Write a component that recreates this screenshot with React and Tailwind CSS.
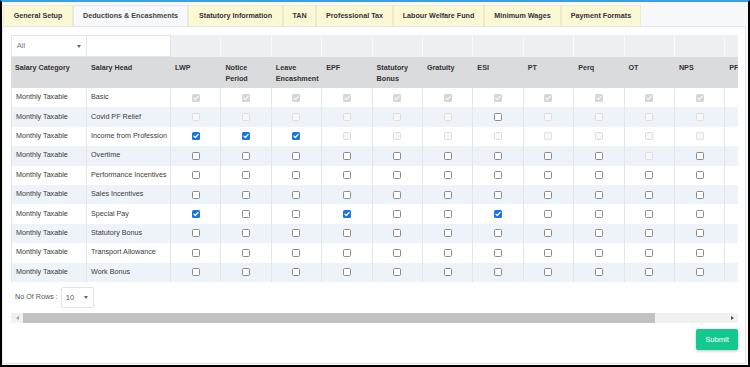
import React from 'react';

const tabs = [
  { label: 'General Setup', w: 'w-[70px]' },
  { label: 'Deductions & Encashments', w: 'w-[115px]', active: true },
  { label: 'Statutory Information', w: 'w-[95px]' },
  { label: 'TAN', w: 'w-[33px]' },
  { label: 'Professional Tax', w: 'w-[77px]' },
  { label: 'Labour Welfare Fund', w: 'w-[91px]' },
  { label: 'Minimum Wages', w: 'w-[77px]' },
  { label: 'Payment Formats', w: 'w-[80px]' },
];

const cols = ['LWP', 'Notice Period', 'Leave Encashment', 'EPF', 'Statutory Bonus', 'Gratuity', 'ESI', 'PT', 'Perq', 'OT', 'NPS', 'PF'];

const all = (s) => Array(11).fill(s);

const rows = [
  { head: 'Basic', boxes: all('dc') },
  { head: 'Covid PF Relief', boxes: ['d', 'd', 'd', 'd', 'd', 'd', 'u', 'd', 'd', 'd', 'd'] },
  { head: 'Income from Profession', boxes: ['c', 'c', 'c', 'd', 'd', 'd', 'd', 'd', 'd', 'd', 'd'] },
  { head: 'Overtime', boxes: ['u', 'u', 'u', 'u', 'u', 'u', 'u', 'u', 'u', 'd', 'u'] },
  { head: 'Performance Incentives', boxes: all('u') },
  { head: 'Sales Incentives', boxes: all('u') },
  { head: 'Special Pay', boxes: ['c', 'u', 'u', 'c', 'u', 'u', 'c', 'u', 'u', 'u', 'u'] },
  { head: 'Statutory Bonus', boxes: all('u') },
  { head: 'Transport Allowance', boxes: all('u') },
  { head: 'Work Bonus', boxes: all('u') },
];

function Tick({ color }) {
  return (
    <svg width="8" height="8" viewBox="0 0 8 8" className="absolute inset-0">
      <path d="M1.9 4.1 L3.3 5.5 L6.1 2.5" fill="none" stroke={color} strokeWidth="1.2" strokeLinecap="round" strokeLinejoin="round" />
    </svg>
  );
}

function Box({ s }) {
  if (s === 'c') {
    return (
      <span className="relative block w-[8px] h-[8px] rounded-[1.5px] bg-[#1a73e8]">
        <Tick color="#ffffff" />
      </span>
    );
  }
  if (s === 'dc') {
    return (
      <span className="relative block w-[8px] h-[8px] rounded-[1.5px] bg-[#d6d6d6]">
        <Tick color="#f4f4f4" />
      </span>
    );
  }
  if (s === 'd') {
    return <span className="block w-[8px] h-[8px] rounded-[1.5px] border border-[#dedede] bg-[#f7f7f7]" />;
  }
  return <span className="block w-[8px] h-[8px] rounded-[1.5px] border border-[#8a8a8a] bg-white" />;
}

export default function App() {
  return (
    <div
      className="w-[750px] h-[367px] flex flex-col bg-[#f7f8fa] border-x-2 border-b-2 border-black border-t-2 border-t-[#3d9fe2] overflow-hidden text-[#333]"
      style={{ fontFamily: '"Liberation Sans", Arial, sans-serif' }}
    >
      {/* tabs */}
      <div className="flex pl-[1px] pt-[3px]">
        {tabs.map((t) => (
          <div
            key={t.label}
            className={
              'h-[21px] flex items-center justify-center text-[7.2px] font-bold border-x border-t ' +
              t.w +
              (t.active
                ? ' bg-[#f6f8fa] border-[#e4e6e9] text-[#444]'
                : ' bg-[#fbf8d6] border-[#efebc8] text-[#333]')
            }
          >
            {t.label}
          </div>
        ))}
      </div>

      {/* panel */}
      <div className="flex-1 mr-[2px] mb-[1px] bg-white border border-[#e6e7ea] pl-[8px] pr-[7px] pt-[8px] flex flex-col">
        <div className="w-[727px] overflow-hidden">
          <div className="w-[800px]">
            {/* filter row */}
            <div className="flex h-[22px] text-[7.2px]">
              <div className="w-[76px] shrink-0 border border-[#e3e5e8] bg-white flex items-center justify-between pl-[5px] pr-[5px]">
                <span className="text-[#777]">All</span>
                <span className="block w-0 h-0 border-x-[2.5px] border-x-transparent border-t-[3px] border-t-[#666]" />
              </div>
              <div className="w-[84px] shrink-0 border-y border-r border-[#e3e5e8] bg-white" />
              {cols.map((c) => (
                <div key={c} className="w-[50.4px] shrink-0 bg-[#eef0f3] border-r border-[#f9fafb]" />
              ))}
            </div>

            {/* header row */}
            <div className="flex h-[31px] bg-[#dadbdc] text-[7.2px] font-bold leading-[11px] text-[#333]">
              <div className="w-[76px] shrink-0 pl-[4px] pt-[5px]">Salary Category</div>
              <div className="w-[84px] shrink-0 pl-[4px] pt-[5px]">Salary Head</div>
              {cols.map((c) => (
                <div key={c} className="w-[50.4px] shrink-0 pl-[4px] pr-[3px] pt-[5px]">
                  {c}
                </div>
              ))}
            </div>

            {/* body */}
            {rows.map((r, i) => (
              <div
                key={r.head}
                className={'flex h-[19.4px] text-[7.2px] text-[#3a3a3a] ' + (i % 2 ? 'bg-[#eef2f9]' : 'bg-white')}
              >
                <div className="w-[76px] shrink-0 pl-[4px] flex items-center border-l border-r border-[#e3e6ea]">
                  Monthly Taxable
                </div>
                <div className="w-[84px] shrink-0 pl-[4px] flex items-center border-r border-[#e3e6ea]">{r.head}</div>
                {cols.map((c, j) => (
                  <div key={c} className="w-[50.4px] shrink-0 flex items-center justify-center border-r border-[#e3e6ea]">
                    {j < 11 && <Box s={r.boxes[j]} />}
                  </div>
                ))}
              </div>
            ))}
          </div>
        </div>

        {/* rows per page */}
        <div className="flex items-center mt-[5px] h-[21px] text-[7.2px] text-[#555]">
          <span className="pl-[4px]">No Of Rows :</span>
          <div className="ml-[3px] w-[33px] h-[21px] border border-[#e1e3e6] rounded-[2px] flex items-center justify-between pl-[4px] pr-[5px] text-[#555]">
            <span className="text-[7.6px]">10</span>
            <span className="block w-0 h-0 border-x-[2.5px] border-x-transparent border-t-[3px] border-t-[#666]" />
          </div>
        </div>

        {/* horizontal scrollbar */}
        <div className="mt-[5px] w-[727px] h-[10px] bg-[#f1f1f1] flex items-center">
          <div className="w-[12px] flex items-center justify-center">
            <span className="block w-0 h-0 border-y-[2px] border-y-transparent border-r-[3px] border-r-[#a3a3a3]" />
          </div>
          <div className="w-[632px] h-[10px] bg-[#c1c1c1]" />
          <div className="flex-1 flex items-center justify-end pr-[4px]">
            <span className="block w-0 h-0 border-y-[2.5px] border-y-transparent border-l-[3px] border-l-[#505050]" />
          </div>
        </div>

        {/* submit */}
        <div className="flex justify-end mt-[6px]">
          <button className="w-[42px] h-[21px] rounded-[2px] bg-[#14c98f] text-white text-[7.6px] shadow-[0_1px_3px_rgba(0,0,0,0.25)]">
            Submit
          </button>
        </div>
      </div>
    </div>
  );
}
